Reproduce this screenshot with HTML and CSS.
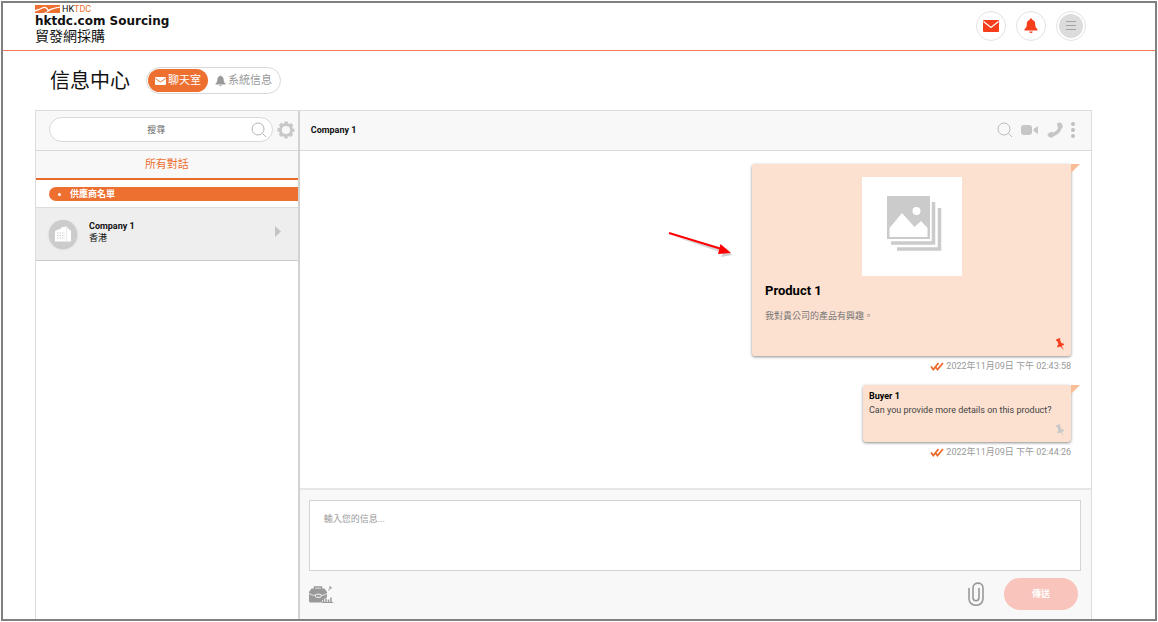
FILE: index.html
```html
<!DOCTYPE html>
<html lang="zh-Hant">
<head>
<meta charset="utf-8">
<meta name="viewport" content="width=device-width, initial-scale=1">
<title>信息中心</title>
<link rel="stylesheet" href="styles.css">
</head>
<body>
<div class="frame">
  <header class="site-header">
    <a class="brand" href="#">
      <span class="brand-top">
        <svg class="brand-mark" viewBox="0 0 25 8" aria-hidden="true"><rect width="25" height="8" fill="#ee7031"/><path d="M0 5C4 4.500 6 2.500 9 1.800C11.500 1.500 12.500 3 13.500 4.800C17 3 21 2 25 1.800V2.800C20 3.500 17 4.500 14 6.300C13 7 12 7.500 10.500 8H8.500C10.500 7.500 12 6.500 12.500 5.700C11.500 3.500 10.500 2.800 9 3C6 3.500 4 5.800 0 6.500z" fill="#fff"/></svg>
        <span class="brand-org">HK<span class="brand-accent">TDC</span></span>
      </span>
      <span class="brand-name">hktdc.com Sourcing</span>
      <span class="brand-zh">貿發網採購</span>
    </a>
    <nav class="header-actions">
      <button class="round-btn" type="button" aria-label="信息"><svg width="16" height="12" viewBox="0 0 16 12"><rect width="16" height="12" rx="1" fill="#f63d1c"/><path d="M.5 1.500L8 7.500L15.500 1.500" fill="none" stroke="#fff" stroke-width="1.300"/></svg></button>
      <button class="round-btn" type="button" aria-label="通知"><svg width="14" height="16" viewBox="0 0 14 16"><path d="M7 .5c-.8 0-1.200.5-1.200 1.200C3.800 2.300 2.800 4 2.800 6c0 3-.8 4-2.300 5.300v1.200h13v-1.200C12 10 11.200 9 11.200 6c0-2-1-3.700-3-4.300C8.200 1 7.800.5 7 .5zM5.300 13.500a1.700 1.500 0 0 0 3.400 0z" fill="#f63d1c"/></svg></button>
      <button class="round-btn" type="button" aria-label="選單"><span class="menu-disc"><svg width="10" height="9" viewBox="0 0 10 9"><path d="M0 .5h10M0 4.500h10M0 8.500h10" stroke="#a3a3a3"/></svg></span></button>
    </nav>
  </header>

  <main class="content">
    <div class="title-row">
      <h1 class="page-title">信息中心</h1>
      <div class="switch">
        <button class="switch-btn switch-on" type="button"><svg width="11" height="8" viewBox="0 0 11 8"><rect width="11" height="8" rx="1" fill="#fff"/><path d="M.5 1.500L5.500 5L10.500 1.500" fill="none" stroke="#ee7031"/></svg>聊天室</button>
        <button class="switch-btn" type="button"><svg width="11" height="12" viewBox="0 0 14 16"><path d="M7 .5c-.8 0-1.200.5-1.200 1.200C3.800 2.300 2.800 4 2.800 6c0 3-.8 4-2.300 5.300v1.200h13v-1.200C12 10 11.200 9 11.200 6c0-2-1-3.700-3-4.300C8.200 1 7.800.5 7 .5zM5.300 13.500a1.700 1.500 0 0 0 3.400 0z" fill="#999"/></svg>系統信息</button>
      </div>
    </div>

    <div class="panel">
      <aside class="sidebar">
        <div class="bar search-bar">
          <div class="search-box">
            <input class="search-input" type="text" placeholder="搜尋" aria-label="搜尋">
            <button class="icon-btn" type="button" aria-label="搜尋"><svg width="16" height="16" viewBox="0 0 16 16"><circle cx="7" cy="7" r="6" fill="none" stroke="#b5b5b5"/><path d="M11.500 11.500L15 15" stroke="#b5b5b5"/></svg></button>
          </div>
          <button class="icon-btn" type="button" aria-label="設定"><svg width="18" height="18" viewBox="0 0 18 18"><circle cx="9" cy="9" r="5.600" fill="none" stroke="#c8c8c8" stroke-width="3"/><circle cx="9" cy="9" r="7.300" fill="none" stroke="#c8c8c8" stroke-width="2.600" stroke-dasharray="3.400 2.333" stroke-dashoffset="1.700"/></svg></button>
        </div>
        <button class="tab" type="button">所有對話</button>
        <div class="group-label"><span class="dot"></span>供應商名單</div>
        <a class="contact" href="#">
          <span class="avatar"><svg width="18" height="16" viewBox="0 0 18 16"><path d="M1 5L7 2.500V15.500H1zM7 1.500L12 .5L17 5V15.500H7z" fill="#fff"/><path d="M3 7h8M3 9.500h8M3 12h8" stroke="#ccc" stroke-dasharray="1.500 1"/><path d="M12.500 2V15.500" stroke="#ddd" stroke-width=".6"/></svg></span>
          <span class="contact-text"><strong>Company 1</strong><span>香港</span></span>
          <svg class="chevron" width="6" height="11" viewBox="0 0 6 11"><path d="M0 0L6 5.500L0 11z" fill="#c4c4c4"/></svg>
        </a>
      </aside>

      <section class="chat">
        <div class="bar chat-head">
          <h2 class="chat-title">Company 1</h2>
          <div class="chat-tools">
            <button class="icon-btn" type="button" aria-label="搜尋對話"><svg width="16" height="16" viewBox="0 0 16 16"><circle cx="7" cy="7" r="6" fill="none" stroke="#bbb"/><path d="M11.500 11.500L15 15" stroke="#bbb"/></svg></button>
            <button class="icon-btn" type="button" aria-label="視像"><svg width="18" height="10" viewBox="0 0 18 10"><rect width="11" height="10" rx="3" fill="#c6c6c6"/><path d="M12.500 4L17 1V9L12.500 6z" fill="#c6c6c6"/></svg></button>
            <button class="icon-btn" type="button" aria-label="通話"><svg width="16" height="16" viewBox="0 0 16 16"><path d="M13.200 3C13.500 8.500 9 13 3 13" fill="none" stroke="#c6c6c6" stroke-width="3.400"/><path d="M9.800 1.800L12.500.2Q16 1 15.700 5.500L11.500 7zM.2 12L5 9.500L7.200 14L4.500 15.700Q1.200 15.500.2 12z" fill="#c6c6c6"/></svg></button>
            <button class="icon-btn" type="button" aria-label="更多"><svg width="4" height="16" viewBox="0 0 4 16"><circle cx="2" cy="2" r="2" fill="#c0c0c0"/><circle cx="2" cy="8" r="2" fill="#c0c0c0"/><circle cx="2" cy="14" r="2" fill="#c0c0c0"/></svg></button>
          </div>
        </div>

        <div class="messages">
          <svg class="pointer-arrow" width="72" height="34" viewBox="0 0 72 34" aria-hidden="true"><path d="M7 8L57 25L55 29L66 27L60 20L58 22z" fill="#999" opacity=".45"/><path d="M3 5L54 20.500" stroke="#f00" stroke-width="2"/><path d="M54.500 16L65 25L52 26z" fill="#f00"/></svg>
          <article class="message">
            <div class="bubble product-card">
              <div class="thumb"><svg width="56" height="56" viewBox="0 0 56 56"><path d="M0 0H43V43H0zM2.500 32V41H40.500V32L34 25L27.500 31L15 17z" fill="#cbcbcb" fill-rule="evenodd"/><circle cx="29.500" cy="15" r="4" fill="#fff"/><path d="M46.500 6V47H4M52.500 12V53H10" fill="none" stroke="#cbcbcb" stroke-width="3.500"/></svg></div>
              <h3 class="product-name">Product 1</h3>
              <p class="product-note">我對貴公司的產品有興趣。</p>
              <svg class="pin pin-on" width="10" height="12" viewBox="0 0 10 12"><path d="M1 1.500L5 0L5.500 1.200L4.800 1.800L6.500 5.200L8.600 5.500L9 7L6.500 8L9 12L5.200 8.500L2.500 9.500L2.200 8L3.500 6.300L2.200 3L1.400 3z"/></svg>
            </div>
            <div class="stamp"><svg width="14" height="9" viewBox="0 0 14 9"><path d="M1 4.500L3.300 7.500L8.500 1M5.500 5L7.500 7.500L13 1" fill="none" stroke="#ee6a2c" stroke-width="1.800"/></svg><time>2022年11月09日 下午 02:43:58</time></div>
          </article>
          <article class="message">
            <div class="bubble text-card">
              <strong class="sender">Buyer 1</strong>
              <p class="text-body">Can you provide more details on this product?</p>
              <svg class="pin" width="10" height="12" viewBox="0 0 10 12"><path d="M1 1.500L5 0L5.500 1.200L4.800 1.800L6.500 5.200L8.600 5.500L9 7L6.500 8L9 12L5.200 8.500L2.500 9.500L2.200 8L3.500 6.300L2.200 3L1.400 3z"/></svg>
            </div>
            <div class="stamp"><svg width="14" height="9" viewBox="0 0 14 9"><path d="M1 4.500L3.300 7.500L8.500 1M5.500 5L7.500 7.500L13 1" fill="none" stroke="#ee6a2c" stroke-width="1.800"/></svg><time>2022年11月09日 下午 02:44:26</time></div>
          </article>
        </div>

        <form class="composer">
          <textarea class="composer-input" placeholder="輸入您的信息..." aria-label="輸入您的信息"></textarea>
          <div class="composer-row">
            <button class="icon-btn" type="button" aria-label="產品"><svg width="24" height="17" viewBox="0 0 24 17"><path d="M5.500 3V1H12.500V3" fill="none" stroke="#999" stroke-width="1.400"/><path d="M2.500 2.500H15.500L18 6V11L12.500 16.500H1.500Q0 16.500 0 15V6z" fill="#999"/><path d="M0 7.500Q3 9.500 6.500 9.500M12 9.500Q15 9.500 18 7.500" fill="none" stroke="#f8f8f8" stroke-width=".8"/><rect x="6.500" y="8.300" width="5.500" height="3" rx="1" fill="#999" stroke="#f8f8f8"/><path d="M14.500 16.500V14M17 16.500V12.500M19.500 16.500V13.500M22 16.500V11.500" stroke="#f8f8f8" stroke-width="3"/><path d="M14.500 16.500V14M17 16.500V12.500M19.500 16.500V13.500M22 16.500V11.500" stroke="#999" stroke-width="1.500"/><path d="M13 16.500H24M19.500 4.500L21.500 1.500M20 1H22V3" fill="none" stroke="#999"/></svg></button>
            <div class="composer-end">
              <button class="icon-btn" type="button" aria-label="附件"><svg width="16" height="24" viewBox="0 0 16 24"><path d="M1 6V16.500C1 25.500 15 25.500 15 16.500V6C15-.5 5 -.5 5 6V15.500C5 19.800 11 19.800 11 15.500V6" fill="none" stroke="#999" stroke-width="1.600"/></svg></button>
              <button class="send" type="submit">傳送</button>
            </div>
          </div>
        </form>
      </section>
    </div>
  </main>
</div>
</body>
</html>
```

FILE: styles.css
```css
* { box-sizing: border-box; }
body { margin: 0; background: #fff; color: #111; font: 9px/12px Roboto, "Noto Sans CJK TC", sans-serif; }
h1, h2, h3, p { margin: 0; }
button { margin: 0; padding: 0; border: 0; background: none; color: inherit; font: inherit; cursor: pointer; }
a { color: inherit; text-decoration: none; }
svg { display: block; flex: none; }

.frame { display: flex; flex-direction: column; min-height: calc(100vh - 2px); margin: 1px; border: 2px solid #7f8080; }

.site-header { display: flex; justify-content: space-between; align-items: center; height: 48px; padding: 0 69px 2px 32px; border-bottom: 1px solid #f4775c; }
.brand { display: flex; flex-direction: column; align-self: flex-start; padding-top: 2px; }
.brand-top { display: flex; align-items: center; gap: 2px; height: 8px; }
.brand-mark { width: 25px; height: 8px; }
.brand-org { font: 9px/8px Roboto, sans-serif; }
.brand-accent { color: #ee7031; }
.brand-name { font: bold 12px/16px "DejaVu Sans", sans-serif; }
.brand-zh { font-size: 14px; line-height: 14px; }
.header-actions { display: flex; gap: 10px; }
.round-btn { display: grid; place-items: center; width: 30px; height: 30px; border: 1px solid #e2e2e2; border-radius: 50%; }
.menu-disc { display: grid; place-items: center; width: 24px; height: 24px; border-radius: 50%; background: #dcdcdc; }

.content { display: flex; flex-direction: column; flex: 1; padding: 0 63px 0 32px; }
.title-row { display: flex; align-items: center; gap: 16px; height: 59px; padding-left: 15px; }
.page-title { font-size: 20px; line-height: 28px; font-weight: 400; }
.switch { display: flex; padding: 1px; border: 1px solid #d8d8d8; border-radius: 14px; }
.switch-btn { display: flex; align-items: center; gap: 2px; height: 23px; padding: 0 7px; border-radius: 12px; color: #999; font-size: 11px; }
.switch-on { background: #ee7031; color: #fff; }

.panel { display: flex; flex: 1; border: 1px solid #dcdcdc; border-bottom: 0; }
.bar { display: flex; align-items: center; height: 40px; padding-bottom: 2px; background: #f8f8f8; border-bottom: 1px solid #d9d9d9; }
.icon-btn { display: grid; place-items: center; }

.sidebar { display: flex; flex-direction: column; width: 25%; border-right: 2px solid #d2d2d2; }
.search-bar { gap: 4px; padding-left: 13px; padding-right: 3px; }
.search-box { display: flex; align-items: center; flex: 1; height: 25px; padding: 0 5px 0 12px; background: #fff; border: 1px solid #d8d8d8; border-radius: 13px; }
.search-input { flex: 1; min-width: 0; padding: 0; border: 0; outline: 0; background: none; font: inherit; text-align: center; }
.search-input::placeholder { color: #666; }
.tab { height: 29px; background: #f8f8f8; border-bottom: 2px solid #ea6a2c; color: #ee7031; font-size: 11px; }
.group-label { display: flex; align-items: center; gap: 9px; height: 14px; margin: 7px 0 6px 13px; padding-left: 9px; border-radius: 7px 0 0 7px; background: #ee7031; color: #fff; font-weight: 700; }
.dot { width: 3px; height: 3px; border-radius: 50%; background: #fff; }
.contact { display: flex; align-items: center; gap: 12px; height: 54px; padding: 0 17px 0 13px; background: #eee; border-top: 1px solid #dcdcdc; border-bottom: 1px solid #ccc; }
.avatar { display: grid; place-items: center; width: 28px; height: 28px; border-radius: 50%; background: #ccc; box-shadow: 0 1px 2px #bbb; }
.contact-text { display: flex; flex-direction: column; flex: 1; padding-bottom: 4px; }
.chevron { margin-bottom: 5px; }

.chat { display: flex; flex-direction: column; flex: 1; min-width: 0; }
.chat-head { justify-content: space-between; padding-left: 11px; padding-right: 16px; }
.chat-title { font-size: 9px; font-weight: 700; }
.chat-tools { display: flex; align-items: center; gap: 8px; }

.messages { position: relative; display: flex; flex-direction: column; flex: 1; align-items: flex-end; gap: 13px; padding: 13px 20px 12px; }
.pointer-arrow { position: absolute; top: 77px; right: 353px; }
.message { display: flex; flex-direction: column; align-items: flex-end; gap: 4px; }
.message + .message { margin-top: -1px; }
.bubble { position: relative; background: #fde1d0; border-radius: 3px; box-shadow: 0 1px 3px #8c8c8c; }
.bubble::after { content: ""; position: absolute; top: 0; left: 100%; border-top: 9px solid #f9bd95; border-right: 9px solid transparent; }
.product-card { display: flex; flex-direction: column; width: 319px; height: 192px; padding: 13px; }
.thumb { display: grid; place-items: center; align-self: center; width: 100px; height: 99px; padding-bottom: 6px; padding-left: 6px; background: #fff; }
.product-name { margin-top: 5px; font-size: 13px; line-height: 20px; color: #000; }
.product-note { margin-top: 9px; color: #777; }
.pin { position: absolute; right: 6px; bottom: 6px; fill: #c8c8c8; }
.pin-on { fill: #f63d1c; }
.text-card { width: 208px; height: 57px; padding: 5px 6px; }
.sender { display: block; color: #000; }
.text-body { margin-top: 2px; color: #444; white-space: nowrap; }
.stamp { display: flex; align-items: center; gap: 2px; color: #999; line-height: 13px; }

.composer { padding: 10px 10px 9px 9px; background: #f8f8f8; border-top: 2px solid #e6e6e6; }
.composer-input { display: block; width: 100%; height: 71px; padding: 12px 14px; resize: none; outline: 0; border: 1px solid #d4d4d4; background: #fff; font: inherit; }
.composer-input::placeholder { color: #999; }
.composer-row { display: flex; align-items: center; justify-content: space-between; margin-top: 7px; padding-right: 3px; }
.composer-end { display: flex; align-items: center; gap: 20px; }
.send { width: 74px; height: 32px; border-radius: 16px; background: #f8c4bb; color: #fff; font-weight: 700; }
```
